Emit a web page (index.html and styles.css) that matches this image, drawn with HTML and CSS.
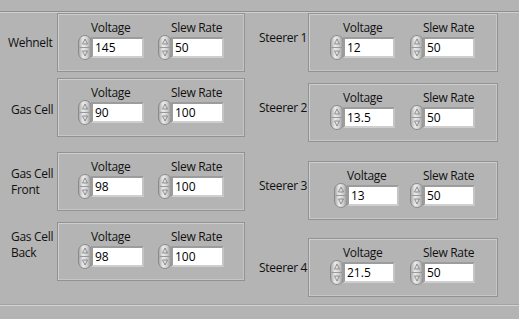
FILE: index.html
```html
<!DOCTYPE html>
<html>
<head>
<meta charset="utf-8">
<link rel="stylesheet" href="styles.css">
</head>
<body>
<svg class="defs" width="0" height="0">
  <defs>
    <linearGradient id="cyl" x1="0" y1="0" x2="1" y2="0">
      <stop offset="0" stop-color="#a4a4a4"/>
      <stop offset="0.35" stop-color="#ececec"/>
      <stop offset="0.65" stop-color="#d2d2d2"/>
      <stop offset="1" stop-color="#8c8c8c"/>
    </linearGradient>
    <symbol id="spin" viewBox="0 0 14 25">
      <rect x="0.5" y="0.5" width="13" height="24" rx="6.5" fill="url(#cyl)" stroke="#8a8a8a"/>
      <line x1="1.5" y1="12.5" x2="12.5" y2="12.5" stroke="#9a9a9a"/>
      <polygon points="7,4 9.5,9 4.5,9" fill="none" stroke="#7a7a7a" stroke-width="0.8"/>
      <polygon points="4.5,16 9.5,16 7,21" fill="none" stroke="#7a7a7a" stroke-width="0.8"/>
    </symbol>
  </defs>
</svg>
<div class="panel">
  <div class="col col-left">
    <div class="row">
      <div class="label lbl-wehnelt">Wehnelt</div>
      <div class="box">
        <div class="ctl"><div class="title">Voltage</div><div class="num"><svg class="spin"><use href="#spin"/></svg><div class="field">145</div></div></div>
        <div class="ctl"><div class="title">Slew Rate</div><div class="num"><svg class="spin"><use href="#spin"/></svg><div class="field">50</div></div></div>
      </div>
    </div>
    <div class="row row-l2">
      <div class="label lbl-down">Gas Cell</div>
      <div class="box">
        <div class="ctl"><div class="title">Voltage</div><div class="num"><svg class="spin"><use href="#spin"/></svg><div class="field">90</div></div></div>
        <div class="ctl"><div class="title">Slew Rate</div><div class="num"><svg class="spin"><use href="#spin"/></svg><div class="field">100</div></div></div>
      </div>
    </div>
    <div class="row row-l3">
      <div class="label">Gas Cell<br>Front</div>
      <div class="box">
        <div class="ctl"><div class="title">Voltage</div><div class="num"><svg class="spin"><use href="#spin"/></svg><div class="field">98</div></div></div>
        <div class="ctl"><div class="title">Slew Rate</div><div class="num"><svg class="spin"><use href="#spin"/></svg><div class="field">100</div></div></div>
      </div>
    </div>
    <div class="row row-l4">
      <div class="label lbl-up">Gas Cell<br>Back</div>
      <div class="box">
        <div class="ctl"><div class="title">Voltage</div><div class="num"><svg class="spin"><use href="#spin"/></svg><div class="field">98</div></div></div>
        <div class="ctl"><div class="title">Slew Rate</div><div class="num"><svg class="spin"><use href="#spin"/></svg><div class="field">100</div></div></div>
      </div>
    </div>
  </div>
  <div class="col col-right">
    <div class="row">
      <div class="label lbl-r lbl-rup">Steerer 1</div>
      <div class="box box-r">
        <div class="ctl"><div class="title">Voltage</div><div class="num"><svg class="spin"><use href="#spin"/></svg><div class="field">12</div></div></div>
        <div class="ctl"><div class="title">Slew Rate</div><div class="num"><svg class="spin"><use href="#spin"/></svg><div class="field">50</div></div></div>
      </div>
    </div>
    <div class="row row-r2">
      <div class="label lbl-r lbl-rup">Steerer 2</div>
      <div class="box box-r">
        <div class="ctl"><div class="title">Voltage</div><div class="num"><svg class="spin"><use href="#spin"/></svg><div class="field">13.5</div></div></div>
        <div class="ctl"><div class="title">Slew Rate</div><div class="num"><svg class="spin"><use href="#spin"/></svg><div class="field">50</div></div></div>
      </div>
    </div>
    <div class="row row-r3">
      <div class="label lbl-r lbl-rup">Steerer 3</div>
      <div class="box box-r box-r3">
        <div class="ctl"><div class="title">Voltage</div><div class="num"><svg class="spin"><use href="#spin"/></svg><div class="field">13</div></div></div>
        <div class="ctl"><div class="title">Slew Rate</div><div class="num"><svg class="spin"><use href="#spin"/></svg><div class="field">50</div></div></div>
      </div>
    </div>
    <div class="row row-r4">
      <div class="label lbl-r">Steerer 4</div>
      <div class="box box-r">
        <div class="ctl"><div class="title">Voltage</div><div class="num"><svg class="spin"><use href="#spin"/></svg><div class="field">21.5</div></div></div>
        <div class="ctl"><div class="title">Slew Rate</div><div class="num"><svg class="spin"><use href="#spin"/></svg><div class="field">50</div></div></div>
      </div>
    </div>
  </div>
</div>
</body>
</html>
```
FILE: styles.css
```css
html, body {
  margin: 0;
  padding: 0;
  background: #b4b4b4;
  width: 519px;
  height: 319px;
  overflow: hidden;
}
body {
  font-family: "Open Sans", "Noto Sans", sans-serif;
  font-size: 12px;
  color: #111;
}
.defs {
  position: absolute;
  width: 0;
  height: 0;
}
.panel {
  margin-top: 11px;
  height: 295px;
  box-sizing: border-box;
  border-top: 1px solid #8f8f8f;
  border-bottom: 1px solid #d3d3d3;
  box-shadow: inset 0 1px 0 #d0d0d0, inset 0 -1px 0 #a2a2a2;
  padding-top: 1px;
  display: flex;
}
.col {
  display: flex;
  flex-direction: column;
}
.col-left { width: 245px; }
.col-right { width: 274px; }
.row {
  display: flex;
  align-items: center;
  height: 59px;
}
.row-l2 { margin-top: 6px; }
.row-l3 { margin-top: 15px; }
.row-l4 { margin-top: 11px; }
.row-r2 { margin-top: 11px; }
.row-r3 { margin-top: 19px; }
.row-r4 { margin-top: 18px; }
.label {
  width: 57px;
  box-sizing: border-box;
  padding-left: 11px;
  line-height: 16px;
  letter-spacing: -0.3px;
  white-space: nowrap;
}
.lbl-wehnelt { padding-left: 8px; }
.lbl-down { padding-top: 5px; }
.lbl-up { padding-bottom: 14px; }
.lbl-r {
  width: 63px;
  padding-left: 14px;
}
.lbl-rup { padding-bottom: 10px; }
.box {
  width: 188px;
  height: 59px;
  box-sizing: border-box;
  border: 1px solid #929292;
  box-shadow: inset 1px 1px 0 #cecece, inset -1px -1px 0 #c6c6c6;
  padding: 6px 0 0 20px;
  display: flex;
  gap: 14px;
}
.box-r {
  width: 190px;
  padding-left: 21px;
  gap: 15px;
}
.box-r3 {
  padding-left: 25px;
  gap: 11px;
}
.ctl {
  display: flex;
  flex-direction: column;
}
.title {
  margin-left: 13px;
  line-height: 15px;
  height: 15px;
  white-space: nowrap;
  letter-spacing: -0.3px;
}
.num {
  display: flex;
  align-items: center;
  height: 25px;
}
.spin {
  width: 14px;
  height: 25px;
  display: block;
  margin-right: -1px;
}
.field {
  width: 47px;
  height: 17px;
  border: 2px solid;
  border-color: #9c9c9c #c4c4c4 #cfcfcf #9c9c9c;
  background: #fff;
  line-height: 17px;
  padding-left: 2px;
  box-sizing: content-box;
  font-size: 12px;
  color: #000;
}
.box-r .field { width: 46px; }
```
